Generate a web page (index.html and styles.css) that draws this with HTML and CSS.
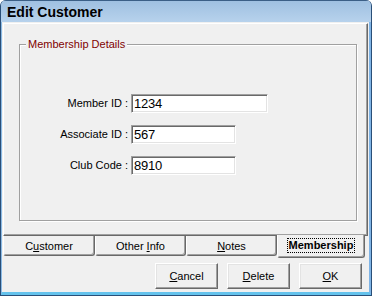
FILE: index.html
```html
<!DOCTYPE html>
<html>
<head>
<meta charset="utf-8">
<link rel="stylesheet" href="styles.css">
</head>
<body>
<div class="window">
  <div class="titlebar">Edit Customer</div>
  <div class="frame">
    <div class="content">
      <div class="tabpanel">
        <div class="group">
          <span class="legend">Membership Details</span>
          <div class="fields">
            <label class="lbl">Member ID :</label>
            <span class="input w-long">1234</span>
            <label class="lbl">Associate ID :</label>
            <span class="input w-short">567</span>
            <label class="lbl">Club Code :</label>
            <span class="input w-short">8910</span>
          </div>
        </div>
      </div>
      <div class="tabs">
        <div class="tab t1">C<u>u</u>stomer</div>
        <div class="tab t2">Other <u>I</u>nfo</div>
        <div class="tab t3"><u>N</u>otes</div>
        <div class="tab selected"><span class="focus">Membership</span></div>
      </div>
      <div class="buttons">
        <button class="btn"><u>C</u>ancel</button>
        <button class="btn"><u>D</u>elete</button>
        <button class="btn"><u>O</u>K</button>
      </div>
    </div>
  </div>
</div>
</body>
</html>
```
FILE: styles.css
```css
* { box-sizing: border-box; }
html, body { margin: 0; padding: 0; background: #fff; }
body { width: 372px; height: 296px; font-family: "Liberation Sans", Arial, sans-serif; font-size: 11px; color: #000; }

.window {
  width: 372px;
  height: 296px;
  display: flex;
  flex-direction: column;
  border: 1px solid #2a4f78;
  border-top: none;
  border-radius: 6px 6px 0 0;
  overflow: hidden;
  background: #a9c8e6;
}

.titlebar {
  height: 22px;
  flex: none;
  border-top: 1px solid #3b5f86;
  padding: 2px 0 0 7px;
  line-height: 18px;
  font-size: 14px;
  font-weight: bold;
  color: #000;
  background: linear-gradient(#9fc0e1, #b7d2ec);
  margin: 0 -1px;
}

.frame {
  flex: 1;
  display: flex;
  border-left: 1px solid #8bbbe6;
  border-right: 2px solid #7fb4e6;
  border-bottom: 3px solid #64c2ec;
  box-shadow: inset -1px 0 0 #5a8fc3;
}

.content {
  flex: 1;
  display: flex;
  flex-direction: column;
  background: #f0f0f0;
  padding: 1px 1px 3px 1px;
}

.tabpanel {
  height: 213px;
  flex: none;
  display: flex;
  flex-direction: column;
  border-top: 1px solid #fff;
  border-left: 1px solid #fff;
  border-right: 1px solid #696969;
  border-bottom: 1px solid #696969;
  box-shadow: inset -1px -1px 0 #a0a0a0;
  padding: 20px 10px 14px 15px;
}

.group {
  flex: 1;
  display: flex;
  flex-direction: column;
  border: 1px solid #a0a0a0;
  box-shadow: 1px 1px 0 #fff, inset 1px 1px 0 #fff;
}

.legend {
  align-self: flex-start;
  margin: -7px 0 0 6px;
  padding: 0 2px;
  line-height: 13px;
  background: #f0f0f0;
  color: #800000;
}

.fields {
  margin-top: 43px;
  display: grid;
  grid-template-columns: 108px auto;
  column-gap: 3px;
  row-gap: 12px;
  align-items: center;
  justify-items: start;
}

.lbl { justify-self: end; line-height: 13px; }

.input {
  height: 19px;
  background: #fff;
  border: 1px solid;
  border-color: #a0a0a0 #fff #fff #a0a0a0;
  box-shadow: inset 1px 1px 0 #696969, inset -1px -1px 0 #e3e3e3;
  padding: 1px 0 0 2px;
  font-size: 13px;
  line-height: 15px;
  letter-spacing: -0.2px;
}
.w-long { width: 137px; }
.w-short { width: 105px; }

.tabs {
  height: 22px;
  flex: none;
  display: flex;
  align-items: flex-start;
}

.tab {
  height: 20px;
  background: #f0f0f0;
  border-left: 1px solid #fff;
  border-right: 1px solid #696969;
  border-bottom: 1px solid #696969;
  border-radius: 0 0 3px 3px;
  box-shadow: inset -1px -1px 0 #a0a0a0;
  text-align: center;
  line-height: 18px;
  padding-top: 1px;
}
.t1 { width: 92px; }
.t2 { width: 91px; }
.t3 { width: 91px; }
.tab.selected {
  width: 88px;
  height: 23px;
  margin-top: -1px;
  font-weight: bold;
  padding-top: 4px;
  line-height: 13px;
}
.focus {
  display: inline-block;
  outline: 1px dotted #000;
  outline-offset: 0;
  padding: 0 1px;
}

.buttons {
  margin-top: 5px;
  display: flex;
  justify-content: flex-end;
  gap: 9px;
  padding-right: 6px;
}

.btn {
  width: 63px;
  height: 26px;
  margin: 0;
  padding: 0;
  font-family: "Liberation Sans", Arial, sans-serif;
  font-size: 11px;
  color: #000;
  background: #f0f0f0;
  border: 1px solid;
  border-color: #fff #696969 #696969 #fff;
  box-shadow: inset -1px -1px 0 #a0a0a0, inset 1px 1px 0 #e3e3e3;
  border-radius: 0;
}
```
